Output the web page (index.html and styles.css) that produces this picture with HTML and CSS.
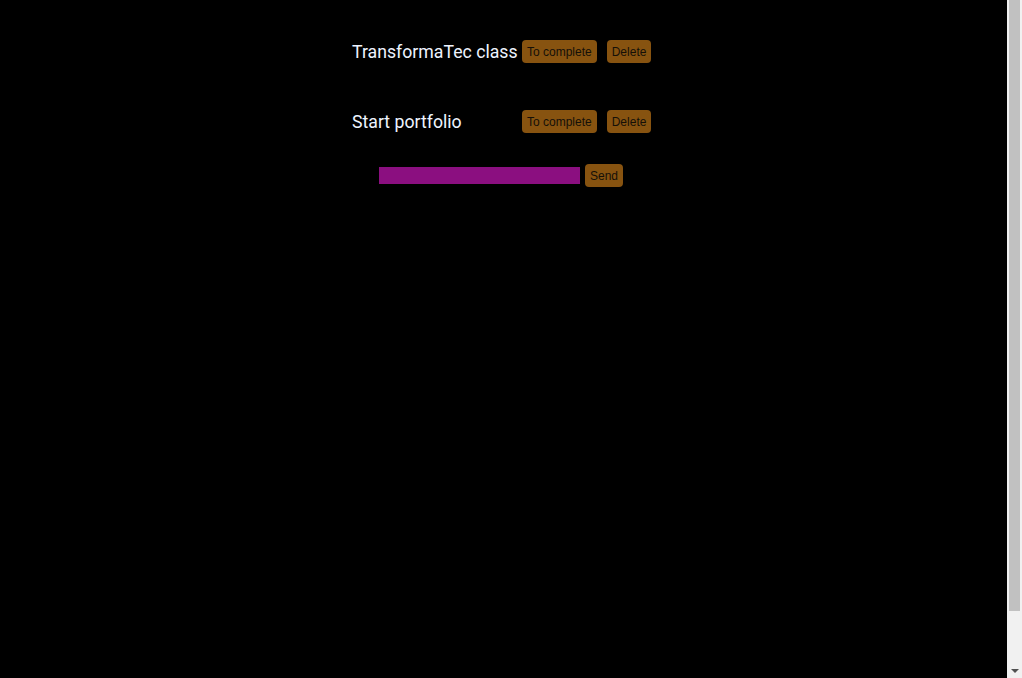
FILE: index.html
```html
<!DOCTYPE html>
<html lang="en">
<head>
<meta charset="utf-8">
<title>Todo</title>
<link rel="stylesheet" href="styles.css">
</head>
<body>
<main class="app">
  <ul class="list">
    <li class="item">
      <span class="label">TransformaTec class</span>
      <button class="btn">To complete</button>
      <button class="btn">Delete</button>
    </li>
    <li class="item">
      <span class="label">Start portfolio</span>
      <button class="btn">To complete</button>
      <button class="btn">Delete</button>
    </li>
  </ul>
  <form class="form">
    <input class="field" type="text">
    <button class="btn" type="button">Send</button>
  </form>
</main>
<aside class="scrollbar" aria-hidden="true">
  <div class="thumb"></div>
  <svg class="arrow" width="8" height="4" viewBox="0 0 8 4"><path d="M0 0H8L4 4Z" fill="#505050"/></svg>
</aside>
</body>
</html>
```
FILE: styles.css
```css
html, body {
  margin: 0;
  padding: 0;
  background: #000;
}
body {
  padding-right: 15px;
  overflow: hidden;
}
.app {
  display: flex;
  flex-direction: column;
  align-items: center;
  padding-top: 40px;
}
.list {
  list-style: none;
  margin: 0 4px 0 0;
  padding: 0;
  display: flex;
  flex-direction: column;
  gap: 47px;
  width: 299px;
}
.item {
  display: flex;
  align-items: center;
  height: 23px;
}
.label {
  width: 170px;
  flex-shrink: 0;
  font-family: Roboto, "Noto Sans", sans-serif;
  font-size: 17.7px;
  color: #eef4ff;
  white-space: nowrap;
}
.btn {
  flex-shrink: 0;
  white-space: nowrap;
  font-family: "Liberation Sans", Arial, sans-serif;
  font-size: 12px;
  color: #151008;
  background: #875310;
  border: none;
  border-radius: 4px;
  height: 23px;
  padding: 0 5px;
  margin: 0 10px 0 0;
}
.item .btn:last-child {
  margin-right: 0;
}
.form {
  display: flex;
  align-items: center;
  gap: 5px;
  margin: 31px 5px 0 0;
}
.field {
  width: 201px;
  height: 17px;
  box-sizing: border-box;
  border: none;
  padding: 0;
  background: #8b0f80;
  outline: none;
}
.form .btn {
  margin: 0;
}
.scrollbar {
  position: fixed;
  top: 0;
  right: 0;
  bottom: 0;
  width: 15px;
  background: #f1f1f1;
  display: flex;
  flex-direction: column;
  align-items: center;
}
.thumb {
  width: 11px;
  height: 611px;
  background: #c1c1c1;
}
.arrow {
  margin-top: auto;
  margin-bottom: 5px;
  display: block;
}
```
